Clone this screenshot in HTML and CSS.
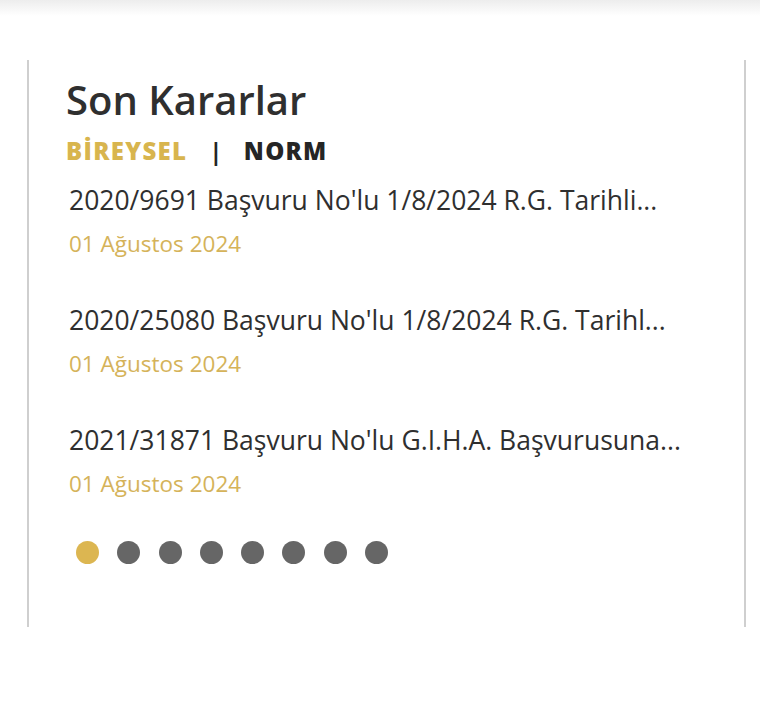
FILE: index.html
```html
<!DOCTYPE html>
<html lang="tr">
<head>
    <meta charset="UTF-8">
    <meta name="viewport" content="width=device-width, initial-scale=1.0">
    <title>Son Kararlar</title>
    <link rel="stylesheet" href="styles.css">
</head>
<body>
    <div class="top-bar"></div>

    <div class="card">
        <h2 class="card-title">Son Kararlar</h2>

        <div class="tabs">
            <span class="tab active">BİREYSEL</span>
            <span class="tab-sep">|</span>
            <span class="tab">NORM</span>
        </div>

        <ul class="decisions">
            <li class="decision">
                <p class="decision-title">2020/9691 Başvuru No'lu 1/8/2024 R.G. Tarihli...</p>
                <p class="decision-date">01 Ağustos 2024</p>
            </li>
            <li class="decision">
                <p class="decision-title">2020/25080 Başvuru No'lu 1/8/2024 R.G. Tarihl...</p>
                <p class="decision-date">01 Ağustos 2024</p>
            </li>
            <li class="decision">
                <p class="decision-title">2021/31871 Başvuru No'lu G.I.H.A. Başvurusuna...</p>
                <p class="decision-date">01 Ağustos 2024</p>
            </li>
        </ul>

        <div class="dots">
            <span class="dot active"></span>
            <span class="dot"></span>
            <span class="dot"></span>
            <span class="dot"></span>
            <span class="dot"></span>
            <span class="dot"></span>
            <span class="dot"></span>
            <span class="dot"></span>
        </div>
    </div>
</body>
</html>
```

FILE: styles.css
```css
body {
    font-family: "Open Sans", Arial, sans-serif;
    margin: 0;
    padding: 0;
    background-color: #ffffff;
    color: #333333;
}

/* Faint shadow under the browser/app header */
.top-bar {
    height: 16px;
    background: linear-gradient(#ededed, #ffffff);
}

.card {
    margin: 44px 14px 0 27px;
    height: 567px;
    border-left: 2px solid #cfcfcf;
    border-right: 2px solid #cfcfcf;
    padding: 14px 0 0 37px;
    box-sizing: border-box;
}

.card-title {
    font-size: 40px;
    font-weight: 600;
    line-height: 52px;
    margin: 0;
    color: #2f2f2f;
}

.tabs {
    display: flex;
    align-items: center;
    margin-top: 10px;
    font-size: 24px;
    font-weight: 800;
    line-height: 30px;
    letter-spacing: 1.3px;
}

.tab {
    color: #252525;
}

.tab.active {
    color: #d8b54e;
}

.tab-sep {
    margin: 0 20px 0 22px;
    font-weight: 700;
    color: #252525;
}

.decisions {
    list-style: none;
    margin: 0;
    padding: 0 0 0 3px;
}

.decision {
    height: 120px;
    padding-top: 18px;
    box-sizing: border-box;
}

.decision-title {
    font-size: 26.5px;
    line-height: 32px;
    margin: 0;
    color: #2f2f2f;
}

.decision-date {
    font-size: 22.5px;
    line-height: 30px;
    margin: 13px 0 0;
    color: #d5b35a;
}

.dots {
    display: flex;
    gap: 18.3px;
    margin: 15px 0 0 10px;
}

.dot {
    width: 23px;
    height: 23px;
    border-radius: 50%;
    background-color: #666666;
}

.dot.active {
    background-color: #dcb651;
}
```
